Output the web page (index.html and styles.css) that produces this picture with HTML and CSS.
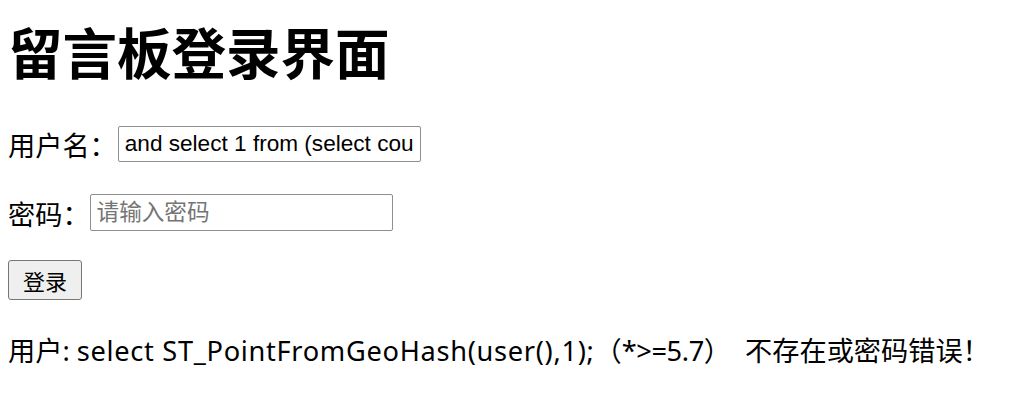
FILE: index.html
```html
<!DOCTYPE html>
<html lang="zh-CN">
<head>
<meta charset="utf-8">
<title>留言板登录界面</title>
<link rel="stylesheet" href="styles.css">
</head>
<body>
<main class="page">
  <h1 class="title">留言板登录界面</h1>
  <form class="login">
    <div class="row row-user">
      <label class="label" for="u">用户名：</label><input id="u" class="field" type="text" value="and select 1 from (select count(*),concat(user(),floor(rand(0)*2))x from information_schema.tables group by x)a">
    </div>
    <div class="row row-pass">
      <label class="label" for="p">密码：</label><input id="p" class="field" type="password" placeholder="请输入密码">
    </div>
    <div class="row row-btn">
      <button class="btn" type="button">登录</button>
    </div>
  </form>
  <p class="result">用户: <span class="sql">select ST_PointFromGeoHash(user(),1);</span>（<span class="ver">*&gt;=5.7</span>） <span class="msg">不存在或密码错误！</span></p>
</main>
</body>
</html>
```
FILE: styles.css
```css
html, body {
  margin: 0;
  padding: 0;
  background: #ffffff;
}
.page {
  display: flex;
  flex-direction: column;
  padding: 0 8px;
  font-family: "Noto Sans", "Noto Sans CJK SC", sans-serif;
  color: #000;
}
.title {
  margin: 20px 0 0;
  font-family: "Noto Sans CJK SC", sans-serif;
  font-size: 54.5px;
  font-weight: 700;
  line-height: 62px;
  height: 62px;
}
.login {
  display: flex;
  flex-direction: column;
  margin-top: 44px;
}
.row {
  display: flex;
  align-items: center;
}
.row-pass { margin-top: 32px; }
.row-btn { margin-top: 29px; }
.label {
  font-family: "Noto Sans CJK SC", sans-serif;
  font-size: 27.2px;
  line-height: 36px;
}
.row-user .field { margin-left: 1px; }
.field {
  box-sizing: border-box;
  width: 303px;
  height: 36px;
  margin: 0;
  padding: 0 6px;
  border: 1px solid #8f8f8f;
  border-radius: 2px;
  font-family: "Liberation Sans", Arial, sans-serif;
  font-size: 22.6px;
  color: #000;
  background: #fff;
  outline: none;
}
.row-pass .field { height: 37px; }
.field::placeholder {
  color: #757575;
  font-family: "Noto Sans CJK SC", sans-serif;
}
.btn {
  box-sizing: border-box;
  width: 74px;
  height: 40px;
  margin: 0;
  padding: 0;
  border: 1px solid #767676;
  border-radius: 3px;
  background: #efefef;
  font-family: "Noto Sans CJK SC", sans-serif;
  font-size: 22px;
  color: #000;
}
.result {
  margin: 31px 0 0;
  font-size: 27.2px;
  line-height: 36px;
  white-space: nowrap;
}
.sql {
  letter-spacing: 0.7px;
}
.ver {
  letter-spacing: -0.4px;
}
.msg {
  margin-left: 7px;
  font-family: "Noto Sans CJK SC", sans-serif;
}
```
